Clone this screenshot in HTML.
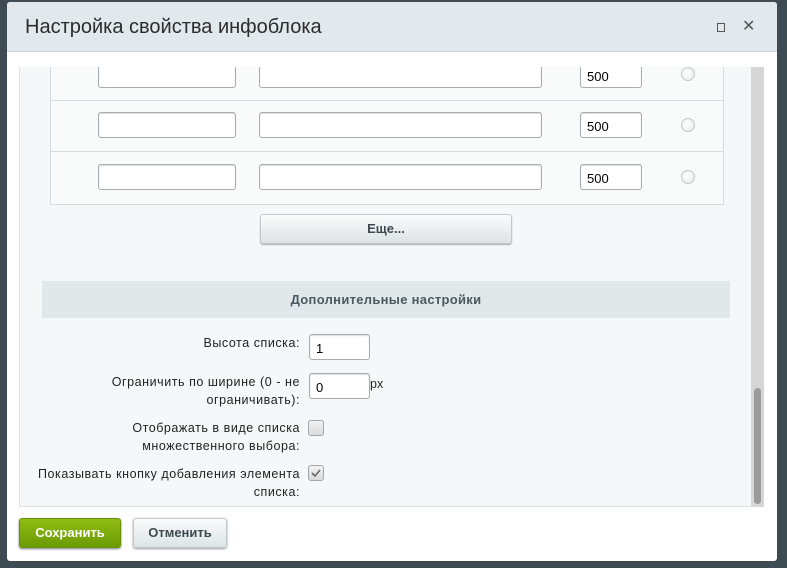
<!DOCTYPE html>
<html><head><meta charset="utf-8"><style>
*{box-sizing:border-box;margin:0;padding:0}
body{width:787px;height:568px;background:#3f4b53;font-family:"Liberation Sans","DejaVu Sans",sans-serif;position:relative;overflow:hidden}
.dlg{position:absolute;left:7px;top:2px;width:770px;height:559px;background:#fff;border-radius:3px}
.hd{position:absolute;left:0;top:0;width:770px;height:50px;background:#e1e9ec;border-bottom:1px solid #c9d2d5;border-radius:3px 3px 0 0}
.hd h1{position:absolute;left:18px;top:14px;font-size:20px;font-weight:normal;color:#2c2c2c}
.panel{position:absolute;left:12px;top:65px;width:733px;height:440px;background:#f5f8f9;border:1px solid #dce3e6;border-top:none;overflow:hidden}
.sb{position:absolute;left:744px;top:65px;width:13px;height:440px;background:#d6d6d6}
.th{position:absolute;left:3px;top:321px;width:7px;height:116px;background:#9b9b9b;border-radius:4px}
.tbl{position:absolute;left:30px;top:-10px;width:674px;height:148px;background:#f9fbfb;border:1px solid #d4dcdf;border-top:none}
.row{position:absolute;left:0;width:672px;border-top:1px solid #d4dcdf}
.in{position:absolute;height:26px;background:#fff;border:1px solid #a5adb3;border-radius:3px;font-size:13px;padding:6px 0 0 6px;color:#000;box-shadow:inset 0 1px 1px #ddd}
.rd{position:absolute;width:14px;height:14px;border-radius:50%;border:1px solid #c5c9c5;background:radial-gradient(circle at 40% 40%,#fff,#e5e8e5)}
.lbl{position:absolute;right:451px;text-align:right;font-size:12.5px;color:#222;line-height:18px;letter-spacing:.55px}
.cb{position:absolute;width:16px;height:16px;border:1px solid #a0a6aa;border-radius:3px;background:linear-gradient(#f2f2f2,#d8dadb)}
.btn{position:absolute;height:30px;border-radius:3px;font-size:13px;font-weight:bold;text-align:center;line-height:28px}
</style></head><body>
<div class="dlg">
<div class="hd"><h1>Настройка свойства инфоблока</h1>
<div style="position:absolute;left:710px;top:21px;width:8px;height:9px;border:1.5px solid #555"></div>
<div style="position:absolute;left:735px;top:14px;font-size:16px;color:#555">✕</div>
</div>
<div class="panel">
<div class="tbl">
<div class="row" style="top:43px"></div>
<div class="row" style="top:94px"></div>
</div>
<div class="in" style="left:78px;top:-5px;width:138px"></div>
<div class="in" style="left:239px;top:-5px;width:283px"></div>
<div class="in" style="left:560px;top:-5px;width:62px">500</div>
<div class="rd" style="left:661px;top:0px"></div>
<div class="in" style="left:78px;top:45px;width:138px"></div>
<div class="in" style="left:239px;top:45px;width:283px"></div>
<div class="in" style="left:560px;top:45px;width:62px">500</div>
<div class="rd" style="left:661px;top:51px"></div>
<div class="in" style="left:78px;top:97px;width:138px"></div>
<div class="in" style="left:239px;top:97px;width:283px"></div>
<div class="in" style="left:560px;top:97px;width:62px">500</div>
<div class="rd" style="left:661px;top:103px"></div>
<div class="btn" style="left:240px;top:147px;width:252px;background:linear-gradient(#fbfcfc,#dde3e5);border:1px solid #c2c9cc;color:#3d4a50;box-shadow:0 1px 1px #aaa">Еще...</div>
<div style="position:absolute;left:22px;top:214px;width:688px;height:37px;background:#e0e8ea;text-align:center;line-height:37px;font-size:13px;font-weight:bold;color:#4b5a60;letter-spacing:.3px">Дополнительные настройки</div>
<div class="lbl" style="top:267px">Высота списка:</div>
<div class="in" style="left:289px;top:267px;width:61px">1</div>
<div class="lbl" style="top:306px">Ограничить по ширине (0 - не<br>ограничивать):</div>
<div class="in" style="left:289px;top:306px;width:61px">0</div>
<div style="position:absolute;left:350px;top:310px;font-size:12.5px;color:#222">px</div>
<div class="lbl" style="top:352px">Отображать в виде списка<br>множественного выбора:</div>
<div class="cb" style="left:288px;top:353px"></div>
<div class="lbl" style="top:398px">Показывать кнопку добавления элемента<br>списка:</div>
<div class="cb" style="left:288px;top:398px"><svg width="14" height="14" viewBox="0 0 14 14"><path d="M3 7l3 3 5-6" fill="none" stroke="#666" stroke-width="1.6"/></svg></div>
</div>
<div class="sb"><div class="th"></div></div>
<div class="btn" style="left:12px;top:516px;width:102px;background:linear-gradient(#8fbd12,#6b9a04);color:#fff;border:1px solid #6a8f0c;box-shadow:0 1px 2px #777">Сохранить</div>
<div class="btn" style="left:126px;top:516px;width:94px;background:linear-gradient(#fbfcfc,#dde3e5);border:1px solid #c2c9cc;color:#3d4a50;box-shadow:0 1px 2px #999">Отменить</div>
</div>
</body></html>
